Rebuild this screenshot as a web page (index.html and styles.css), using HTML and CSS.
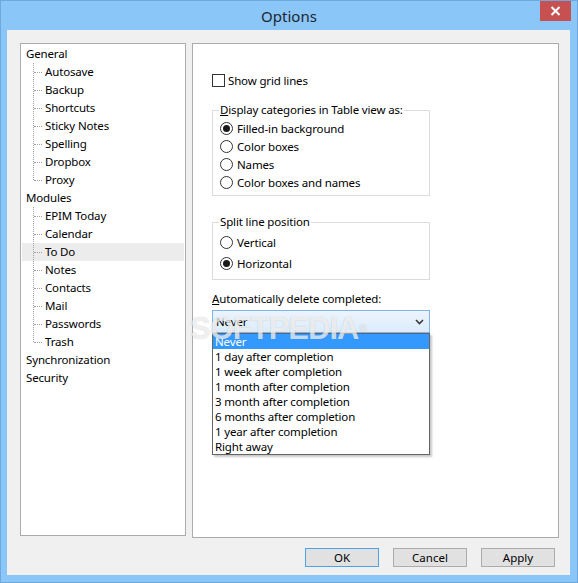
FILE: index.html
```html
<!DOCTYPE html>
<html lang="en">
<head>
<meta charset="utf-8">
<title>Options</title>
<link rel="stylesheet" href="styles.css">
</head>
<body>
<div class="window">
  <div class="titlebar">
    <span class="title">Options</span>
    <div class="close">
      <svg width="11" height="10" viewBox="0 0 11 10"><path d="M1.5 1 L9.5 9 M9.5 1 L1.5 9" stroke="#fff" stroke-width="2" fill="none"/></svg>
    </div>
  </div>
  <div class="client">
    <div class="main">
      <div class="tree">
        <div class="node">General</div>
        <div class="children">
          <div class="leaf">Autosave</div>
          <div class="leaf">Backup</div>
          <div class="leaf">Shortcuts</div>
          <div class="leaf">Sticky Notes</div>
          <div class="leaf">Spelling</div>
          <div class="leaf">Dropbox</div>
          <div class="leaf">Proxy</div>
        </div>
        <div class="node">Modules</div>
        <div class="children">
          <div class="leaf">EPIM Today</div>
          <div class="leaf">Calendar</div>
          <div class="leaf selected">To Do</div>
          <div class="leaf">Notes</div>
          <div class="leaf">Contacts</div>
          <div class="leaf">Mail</div>
          <div class="leaf">Passwords</div>
          <div class="leaf">Trash</div>
        </div>
        <div class="node">Synchronization</div>
        <div class="node">Security</div>
      </div>
      <div class="panel">
        <div class="check-row"><span class="checkbox"></span><span>Show grid lines</span></div>
        <fieldset class="group g1">
          <legend><u>D</u>isplay categories in Table view as:</legend>
          <div class="radio-row first"><span class="radio checked"></span><span>Filled-in background</span></div>
          <div class="radio-row"><span class="radio"></span><span>Color boxes</span></div>
          <div class="radio-row"><span class="radio"></span><span>Names</span></div>
          <div class="radio-row"><span class="radio"></span><span>Color boxes and names</span></div>
        </fieldset>
        <fieldset class="group g2">
          <legend>Split line position</legend>
          <div class="radio-row spaced"><span class="radio"></span><span>Vertical</span></div>
          <div class="radio-row spaced"><span class="radio checked"></span><span>Horizontal</span></div>
        </fieldset>
        <div class="combo-label"><u>A</u>utomatically delete completed:</div>
        <div class="combo-wrap">
          <div class="combo">
            <span class="combo-value">Never</span>
            <svg class="chevron" width="9" height="6" viewBox="0 0 9 6"><path d="M1 1 L4.5 4.5 L8 1" stroke="#3a3a3a" stroke-width="1.6" fill="none"/></svg>
          </div>
          <ul class="dropdown">
            <li class="active">Never</li>
            <li>1 day after completion</li>
            <li>1 week after completion</li>
            <li>1 month after completion</li>
            <li>3 month after completion</li>
            <li>6 months after completion</li>
            <li>1 year after completion</li>
            <li>Right away</li>
          </ul>
        </div>
        <div class="watermark">SOFTPEDIA<span class="reg">®</span></div>
      </div>
    </div>
    <div class="buttons">
      <button class="btn default">OK</button>
      <button class="btn">Cancel</button>
      <button class="btn">Apply</button>
    </div>
  </div>
</div>
</body>
</html>
```
FILE: styles.css
```css
html, body {
  margin: 0;
  padding: 0;
}
body {
  font-family: "Noto Sans", "Open Sans", sans-serif;
  font-size: 11.5px;
  letter-spacing: -0.15px;
  color: #000;
}
.window {
  width: 578px;
  height: 583px;
  box-sizing: border-box;
  border: 1px solid #6FA8DC;
  background: #8BC6F8;
  display: flex;
  flex-direction: column;
}
.titlebar {
  height: 29px;
  position: relative;
  display: flex;
  align-items: center;
  justify-content: center;
  box-sizing: border-box;
}
.title {
  font-size: 15px;
  letter-spacing: 0;
  color: #1d2630;
}
.close {
  position: absolute;
  top: 0;
  right: 6px;
  width: 31px;
  height: 20px;
  background: #C75050;
  display: flex;
  align-items: center;
  justify-content: center;
}
.client {
  margin: 0 7px 0 6px;
  height: 545px;
  background: #F0F0F0;
  box-sizing: border-box;
  padding: 13px 11px 0 13px;
}
.main {
  display: flex;
  gap: 6px;
  align-items: flex-start;
}
.tree {
  width: 166px;
  height: 493px;
  box-sizing: border-box;
  border: 1px solid #ABABAB;
  background: #fff;
  padding-top: 1px;
}
.node, .leaf {
  height: 18px;
  line-height: 18px;
  margin: 0 1px;
  position: relative;
  white-space: nowrap;
}
.node {
  padding-left: 4px;
}
.leaf {
  padding-left: 23px;
}
.leaf::before {
  content: "";
  position: absolute;
  left: 12px;
  top: 9px;
  width: 8px;
  border-top: 1px dotted #A0A0A0;
}
.children {
  position: relative;
}
.children::before {
  content: "";
  position: absolute;
  left: 12px;
  top: 0;
  bottom: 9px;
  border-left: 1px dotted #A0A0A0;
  z-index: 1;
}
.leaf.selected {
  background: #ECECEC;
}
.panel {
  width: 367px;
  height: 495px;
  box-sizing: border-box;
  border: 1px solid #ABABAB;
  background: #fff;
  position: relative;
  padding: 0 0 0 19px;
}
.check-row {
  display: flex;
  align-items: center;
  height: 16px;
  margin-top: 28px;
}
.checkbox {
  width: 13px;
  height: 13px;
  box-sizing: border-box;
  border: 1px solid #333;
  background: #fff;
  margin-right: 3px;
}
.group {
  width: 218px;
  box-sizing: border-box;
  margin: 14px 0 0 0;
  border: 1px solid #DCDCDC;
  padding: 0 0 4px 6px;
  min-width: 0;
}
.group legend {
  padding: 0 1px;
  line-height: 16px;
  height: 16px;
}
.g2 {
  margin-top: 18px;
  padding-bottom: 7px;
}
.radio-row {
  display: flex;
  align-items: center;
  height: 18px;
  margin-left: 1px;
}
.radio-row.first {
  margin-top: 1px;
}
.radio-row.spaced {
  margin-top: 3px;
}
.radio {
  width: 13px;
  height: 13px;
  box-sizing: border-box;
  border: 1px solid #333;
  border-radius: 50%;
  background: #fff;
  margin-right: 4px;
  display: flex;
  align-items: center;
  justify-content: center;
}
.radio.checked::after {
  content: "";
  width: 7px;
  height: 7px;
  border-radius: 50%;
  background: #1a1a1a;
}
.combo-label {
  margin-top: 11px;
  line-height: 16px;
}
.combo-wrap {
  position: relative;
  width: 218px;
  margin-top: 3px;
}
.combo {
  height: 23px;
  box-sizing: border-box;
  border: 1px solid #7EB4EA;
  background: linear-gradient(#ECF4FC, #DCECFC);
  display: flex;
  align-items: center;
  justify-content: space-between;
  padding: 0 5px 0 3px;
}
.chevron {
  display: block;
}
.dropdown {
  position: absolute;
  top: 23px;
  left: 0;
  width: 218px;
  box-sizing: border-box;
  margin: 0;
  padding: 0;
  list-style: none;
  background: #fff;
  border: 1px solid #646464;
  box-shadow: 2px 2px 2px rgba(0, 0, 0, 0.22);
  z-index: 2;
}
.dropdown li {
  height: 15px;
  line-height: 15px;
  padding-left: 2px;
  white-space: nowrap;
}
.dropdown li.active {
  background: #3399FF;
  color: #fff;
}
.watermark {
  position: absolute;
  left: -3px;
  top: 269px;
  font-family: "Liberation Sans", sans-serif;
  font-weight: bold;
  font-size: 31px;
  line-height: 31px;
  letter-spacing: -1px;
  color: rgba(255, 255, 255, 0.72);
  text-shadow: 0 0 1px rgba(0, 0, 0, 0.22);
  z-index: 3;
  pointer-events: none;
  white-space: nowrap;
}
.watermark .reg {
  font-size: 10px;
  letter-spacing: 0;
  vertical-align: top;
  margin-left: 1px;
}
.buttons {
  display: flex;
  justify-content: flex-end;
  gap: 14px;
  margin-top: 10px;
  padding-right: 4px;
}
.btn {
  width: 74px;
  height: 19px;
  box-sizing: border-box;
  border: 1px solid #ACACAC;
  background: #E1E1E1;
  font: inherit;
  color: #000;
  padding: 0;
  line-height: 17px;
}
.btn.default {
  border-color: #4DA3E8;
}
```
